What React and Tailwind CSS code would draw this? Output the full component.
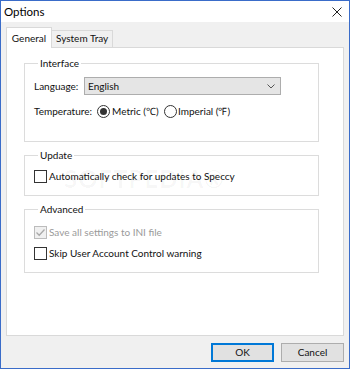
import React from "react";

const font = { fontFamily: "Lato, 'Liberation Sans', sans-serif" };

function Checkbox({ checked, disabled }) {
  return (
    <span
      className={`flex h-[13px] w-[13px] shrink-0 items-center justify-center border ${
        disabled ? "border-[#bcbcbc] bg-[#f0f0f0]" : "border-[#333333] bg-white"
      }`}
    >
      {checked && (
        <svg width="11" height="11" viewBox="0 0 11 11">
          <path d="M1.5 5.5 L4.2 8.2 L9.5 2.5" fill="none" stroke={disabled ? "#a8a8a8" : "#333"} strokeWidth="1.3" />
        </svg>
      )}
    </span>
  );
}

function Radio({ checked }) {
  return (
    <span className="flex h-[13px] w-[13px] shrink-0 items-center justify-center rounded-full border border-[#333333] bg-white">
      {checked && <span className="h-[7px] w-[7px] rounded-full bg-[#333333]" />}
    </span>
  );
}

export default function App() {
  return (
    <div
      className="relative flex h-[369px] w-[350px] flex-col border border-[#3a6cc9] bg-[#f0f0f0] text-[10px] text-[#111111]"
      style={font}
    >
      <div className="flex h-[21px] shrink-0 items-center justify-between bg-white pl-[3px] pr-[7px]">
        <span className="text-[11.5px] text-black">Options</span>
        <svg width="10" height="10" viewBox="0 0 10 10" className="mt-[1px]">
          <path d="M0.5 0.5 L9.5 9.5 M9.5 0.5 L0.5 9.5" stroke="#222" strokeWidth="1" fill="none" />
        </svg>
      </div>

      <div className="flex flex-1 flex-col px-[5px] pt-[5px]">
        <div className="flex items-end">
          <div className="relative z-10 -mb-px flex h-[21px] w-[46px] items-start justify-center border border-b-0 border-[#d9d9d9] bg-white pt-[3px]">
            General
          </div>
          <div className="flex h-[17px] items-center border border-b-0 border-l-0 border-[#d9d9d9] bg-[#f0f0f0] px-[4px] pb-[1px]">
            System Tray
          </div>
        </div>

        <div className="relative flex h-[289px] flex-col border border-[#d9d9d9] bg-white">
          <fieldset className="ml-[17px] mt-[7px] w-[295px] border border-[#dcdcdc] pb-[22px] pl-[9px]">
            <legend className="ml-[4px] px-[2px] leading-[16px]">Interface</legend>
            <div className="mt-[6px] flex items-center">
              <span className="w-[50px]">Language:</span>
              <div className="flex h-[18px] w-[197px] items-center justify-between border border-[#adadad] bg-[#e5e5e5] pl-[3px] pr-[5px]">
                <span>English</span>
                <svg width="8" height="5" viewBox="0 0 8 5">
                  <path d="M0.5 0.5 L4 4 L7.5 0.5" stroke="#555" strokeWidth="1" fill="none" />
                </svg>
              </div>
            </div>
            <div className="mt-[8px] flex h-[16px] items-center">
              <span className="w-[63px]">Temperature:</span>
              <Radio checked />
              <span className="ml-[2px] w-[52px]">Metric (℃)</span>
              <Radio />
              <span className="ml-[1px]">Imperial (℉)</span>
            </div>
          </fieldset>

          <fieldset className="ml-[17px] mt-[5px] w-[295px] border border-[#dcdcdc] pb-[11px] pl-[9px]">
            <legend className="ml-[4px] px-[2px] leading-[16px]">Update</legend>
            <div className="mt-[5px] flex h-[16px] items-center">
              <Checkbox />
              <span className="ml-[2px]">Automatically check for updates to Speccy</span>
            </div>
          </fieldset>

          <fieldset className="ml-[17px] mt-[5px] w-[295px] border border-[#dcdcdc] pb-[11px] pl-[9px]">
            <legend className="ml-[4px] px-[2px] leading-[16px]">Advanced</legend>
            <div className="mt-[7px] flex h-[16px] items-center text-[#9a9a9a]">
              <Checkbox checked disabled />
              <span className="ml-[2px]">Save all settings to INI file</span>
            </div>
            <div className="mt-[5px] flex h-[16px] items-center">
              <Checkbox />
              <span className="ml-[2px]">Skip User Account Control warning</span>
            </div>
          </fieldset>

          <div className="pointer-events-none absolute left-[57px] top-[113px] text-[24px] font-bold tracking-[1px] text-black/[0.04]">
            SOFTPEDIA®
          </div>
        </div>

        <div className="mt-[7px] flex justify-end gap-[7px]">
          <button className="flex h-[19px] w-[63px] items-center justify-center border-2 border-[#0078d7] bg-[#e1e1e1]">
            OK
          </button>
          <button className="flex h-[19px] w-[63px] items-center justify-center border border-[#adadad] bg-[#e1e1e1]">
            Cancel
          </button>
        </div>
      </div>
    </div>
  );
}
